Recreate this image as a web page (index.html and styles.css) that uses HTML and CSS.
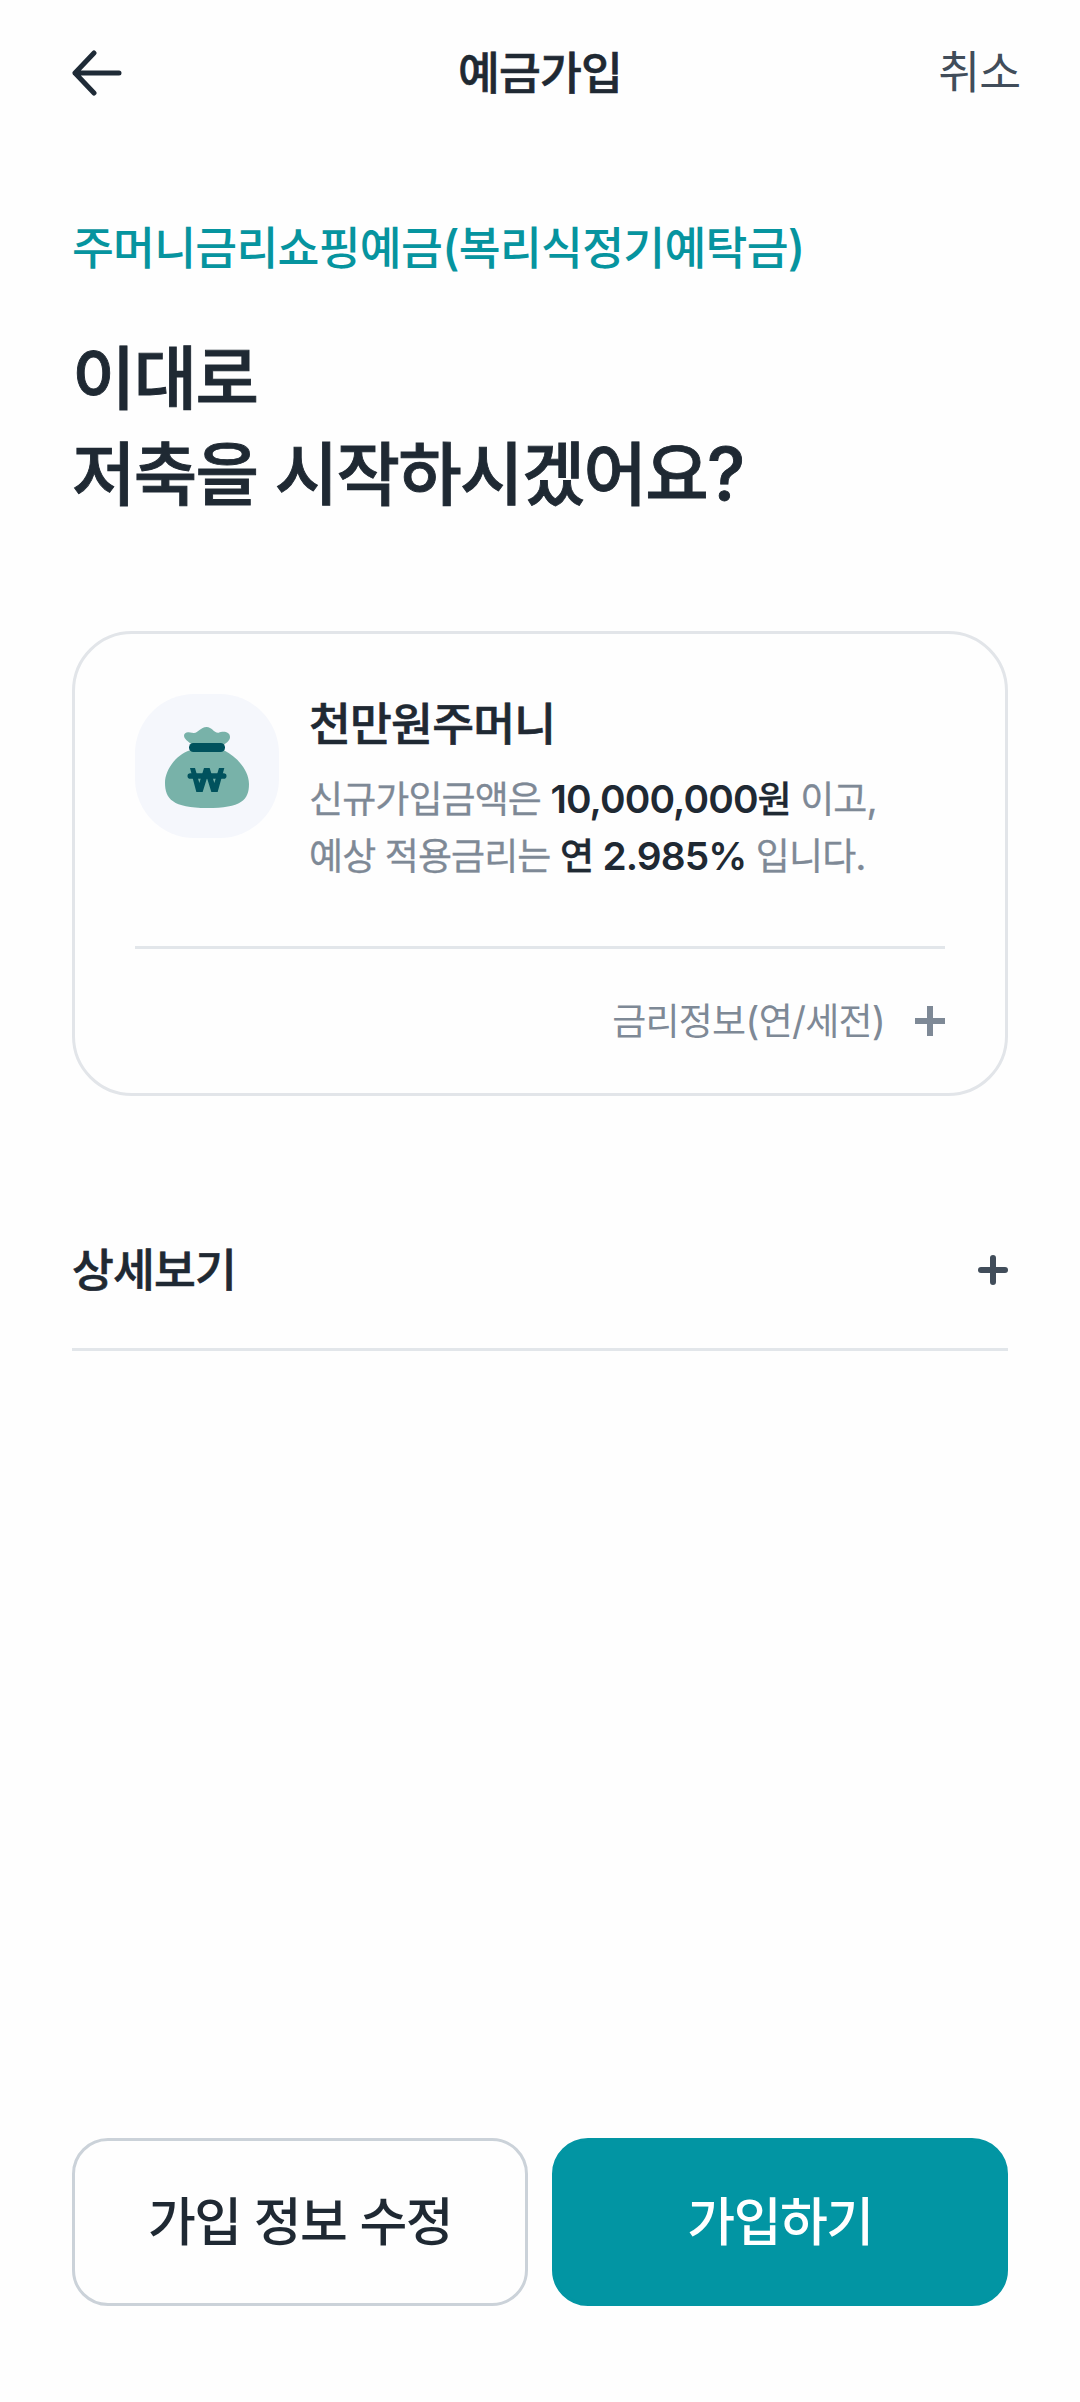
FILE: index.html
```html
<!DOCTYPE html>
<html lang="ko">
<head>
<meta charset="utf-8">
<meta name="viewport" content="width=device-width">
<title>예금가입</title>
<link rel="stylesheet" href="styles.css">
</head>
<body>
<div class="screen">
  <header class="topbar">
    <svg class="back" viewBox="0 0 50 46" aria-label="뒤로"><path d="M22 3 3 23l19 20M3 23h44"/></svg>
    <h1 class="topbar-title">예금가입</h1>
    <span class="cancel">취소</span>
  </header>
  <main class="content">
    <p class="product">주머니금리쇼핑예금<span class="lat">(</span>복리식정기예탁금<span class="lat">)</span></p>
    <h2 class="question">이대로<br>저축을 시작하시겠어요<span class="lat">?</span></h2>
    <section class="card">
      <div class="summary">
        <svg class="pouch" viewBox="15 12 432 432">
          <rect x="15" y="12" width="432" height="432" rx="178" fill="#f5f7fc"/>
          <path d="M187 163C174 156 162 145 162 137C162 130 169 126 176 127L191 129C204 130 211 111 230 111C246 111 252 130 266 128C276 123 300 122 300 141C300 151 291 158 282 163V181C321 201 357 241 357 282C357 330 334 354 231 354C128 354 105 326 105 279C105 240 137 195 180 181Z" fill="#78b2a9"/>
          <rect x="177" y="159" width="108" height="27" rx="13" fill="#00525d"/>
          <path d="M180 234H195L208 279 222 234H239L253 279 267 234H283L263 306H244L231 264 218 306H199Z" fill="#00525d"/>
          <path d="M181 258H281" fill="none" stroke="#00525d" stroke-width="17" stroke-linecap="round"/>
        </svg>
        <div class="summary-text">
          <h3 class="card-title">천만원주머니</h3>
          <p class="desc desc-amount">신규가입금액은 <strong><span class="lat">10,000,000</span>원</strong> 이고<span class="lat">,</span></p>
          <p class="desc desc-rate">예상 적용금리는 <strong>연 <span class="lat">2.985%</span></strong> 입니다<span class="lat">.</span></p>
        </div>
      </div>
      <div class="rate-info">
        <span class="rate-label">금리정보<span class="lat">(</span>연<span class="lat">/</span>세전<span class="lat">)</span></span>
        <svg class="plus" viewBox="0 0 30 30"><path d="M15 0v30M0 15h30"/></svg>
      </div>
    </section>
    <section class="details">
      <h3 class="details-title">상세보기</h3>
      <svg class="plus plus-round" viewBox="0 0 30 30"><path d="M15 3v24M3 15h24"/></svg>
    </section>
  </main>
  <footer class="actions">
    <button class="btn btn-edit">가입 정보 수정</button>
    <button class="btn btn-join">가입하기</button>
  </footer>
</div>
</body>
</html>
```

FILE: styles.css
```css
* { box-sizing: border-box; margin: 0; padding: 0; }
body { background: #fefefe; }
.screen {
  width: 1080px;
  height: 2402px;
  display: flex;
  flex-direction: column;
  font-family: "Noto Sans CJK KR", sans-serif;
  color: #1f2933;
  white-space: nowrap;
}
.lat { font-family: Inter, sans-serif; font-size: 1.05em; line-height: 0; }
/* semi-bold headings: medium weight with a hairline outline */
.topbar-title, .card-title, .details-title {
  font-size: 45.500px;
  font-weight: 500;
  line-height: 60px;
  letter-spacing: -0.900px;
  -webkit-text-stroke: 0.600px currentColor;
}
.topbar {
  height: 144px;
  padding: 0 60px 0 72px;
  display: grid;
  grid-template-columns: 386px 1fr auto;
  align-items: center;
}
.back { width: 50px; height: 46px; margin-top: 2px; fill: none; stroke: #1f2b37; stroke-width: 5; stroke-linecap: round; stroke-linejoin: round; }
.topbar-title { padding-bottom: 5px; }
.cancel { font-size: 45.500px; line-height: 60px; letter-spacing: -1px; color: #414d5a; padding-bottom: 6px; }
.content { flex: 1; padding: 69px 72px 0; }
.product { font-size: 45.500px; font-weight: 500; line-height: 64px; letter-spacing: -0.750px; color: #06949f; }
.question {
  margin-top: 49px;
  font-size: 69px;
  font-weight: 500;
  line-height: 96px;
  letter-spacing: -1.750px;
  -webkit-text-stroke: 0.900px currentColor;
}
.card {
  height: 465px;
  margin-top: 113px;
  padding: 60px;
  border: 3px solid #e2e5e9;
  border-radius: 60px;
}
.summary { display: flex; gap: 30px; height: 255px; border-bottom: 3px solid #e2e6ea; }
.pouch { width: 144px; height: 144px; flex: none; }
.card-title { line-height: 54px; letter-spacing: -0.800px; }
.desc { font-size: 37px; line-height: 57px; letter-spacing: -0.900px; color: #7e8996; -webkit-text-stroke: 0.300px currentColor; }
.desc-amount { margin-top: 21px; }
.desc strong { font-weight: 500; color: #1f2933; }
.desc strong .lat { font-weight: 600; -webkit-text-stroke: 0; }
.rate-info { display: flex; justify-content: flex-end; align-items: center; gap: 30px; height: 144px; color: #7e8996; }
.rate-label { font-size: 37px; line-height: 57px; letter-spacing: -0.800px; padding-bottom: 4px; }
.plus { width: 30px; height: 30px; flex: none; fill: none; stroke: #7e8996; stroke-width: 6; }
.plus-round { stroke: #414d5a; stroke-linecap: round; margin-top: 2px; }
.details {
  display: flex;
  justify-content: space-between;
  align-items: center;
  height: 162px;
  margin-top: 93px;
  border-bottom: 3px solid #e2e6ea;
}
.details-title { padding-bottom: 4px; }
.actions { display: grid; grid-template-columns: 1fr 1fr; gap: 24px; padding: 0 72px 96px; }
.btn {
  height: 168px;
  padding-bottom: 6px;
  border: 3px solid #cbd2d9;
  border-radius: 36px;
  background: transparent;
  font: 500 52px/72px "Noto Sans CJK KR", sans-serif;
  letter-spacing: -1.500px;
  color: #1f2933;
}
.btn-join { border-color: #0295a3; background: #0295a3; color: #fff; }
```
